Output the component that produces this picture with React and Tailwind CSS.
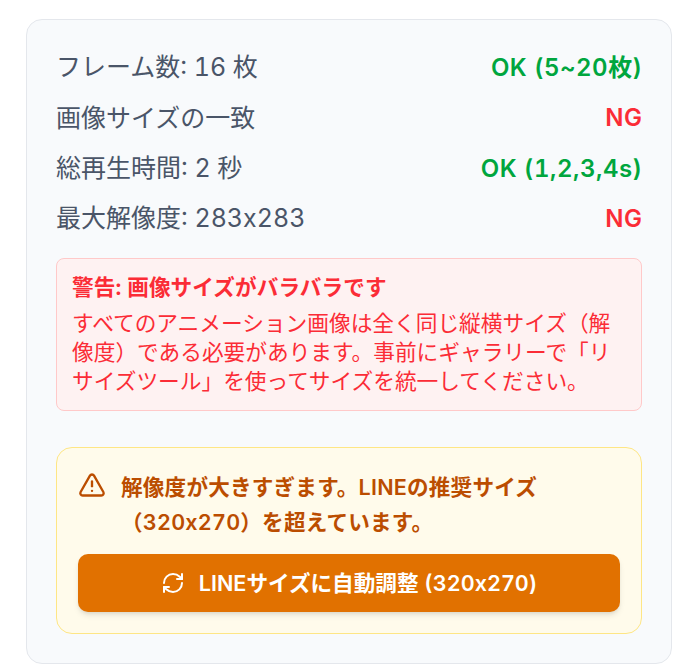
import React from 'react';
import { TriangleAlert, RefreshCw } from 'lucide-react';

const rows = [
  { label: 'フレーム数: 16 枚', value: 'OK (5~20枚)', ok: true },
  { label: '画像サイズの一致', value: 'NG', ok: false },
  { label: '総再生時間: 2 秒', value: 'OK (1,2,3,4s)', ok: true },
  { label: '最大解像度: 283x283', value: 'NG', ok: false },
];

export default function App() {
  return (
    <div className="w-[696px] h-[672px] bg-white pt-[19px] pl-[26px] tabular-nums font-['Inter','Noto_Sans_CJK_JP',sans-serif]">
      <div className="w-[646px] h-[645px] bg-[#f8fafc] border border-[#e4e7ec] rounded-2xl px-[29px] pt-[23px]">
        {/* Checks */}
        <div className="flex flex-col">
          {rows.map((row) => (
            <div key={row.label} className="flex justify-between items-center h-[50.3px]">
              <span className="text-[25px] text-[#4a5568]">{row.label}</span>
              <span className={`text-[24px] tracking-[0.5px] -mr-[0.5px] font-semibold ${row.ok ? 'text-[#00a63e]' : 'text-[#fb2c36]'}`}>{row.value}</span>
            </div>
          ))}
        </div>

        {/* Error */}
        <div className="mt-[14px] h-[153px] bg-[#fef2f2] border border-[#ffc9c9] rounded-lg px-[15px] pt-[13px]">
          <p className="text-[21.6px] tracking-[0.1px] leading-[30px] font-bold text-[#fb2c36]">警告: 画像サイズがバラバラです</p>
          <p className="mt-[6.5px] text-[21.7px] leading-[29px] text-[#fb2c36]">
            すべてのアニメーション画像は全く同じ縦横サイズ（解像度）である必要があります。事前にギャラリーで「リサイズツール」を使ってサイズを統一してください。
          </p>
        </div>

        {/* Warning */}
        <div className="mt-[36px] h-[187px] bg-[#fffbeb] border border-[#fee685] rounded-2xl px-[21px] pt-[22px]">
          <div className="flex gap-[15px]">
            <TriangleAlert className="w-7 h-7 mt-[1px] shrink-0 text-[#bb4d00]" strokeWidth={2} />
            <p className="text-[21.6px] tracking-[0.2px] leading-[35px] font-semibold text-[#bb4d00]">
              解像度が大きすぎます。LINEの推奨サイズ（320x270）を超えています。
            </p>
          </div>
          <button className="mt-[14px] w-full h-[58px] flex items-center justify-center gap-[14px] bg-[#e17100] rounded-[10px] shadow-md text-white text-[21.6px] font-semibold">
            <RefreshCw className="w-6 h-6" strokeWidth={2} />
            LINEサイズに自動調整 (320x270)
          </button>
        </div>
      </div>
    </div>
  );
}
